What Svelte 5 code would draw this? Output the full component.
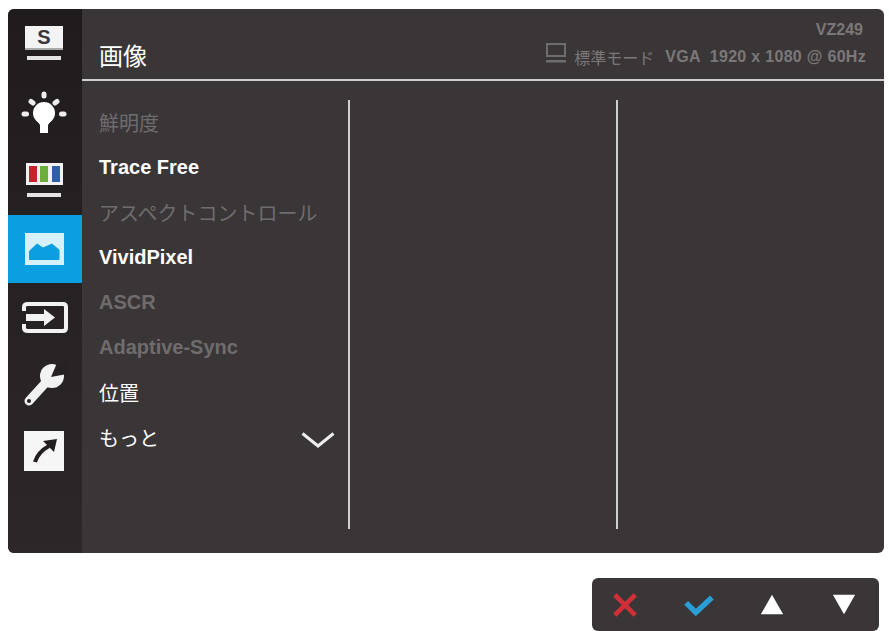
<script lang="ts">
    const items = [
        { label: '鮮明度', dim: true },
        { label: 'Trace Free' },
        { label: 'アスペクトコントロール', dim: true },
        { label: 'VividPixel' },
        { label: 'ASCR', dim: true },
        { label: 'Adaptive-Sync', dim: true },
        { label: '位置' },
        { label: 'もっと', more: true }
    ]
</script>

<div class="page">
    <div class="panel">
        <nav class="side">
            <div class="cell">
                <svg viewBox="0 0 44 44">
                    <rect x="2" y="3" width="38" height="24" fill="#f4f4f4" />
                    <rect x="2" y="25" width="38" height="2" fill="#a9a9a9" />
                    <text x="21" y="20.5" text-anchor="middle" class="s">S</text>
                    <rect x="4" y="33" width="34" height="4" fill="#e4e4e4" />
                </svg>
            </div>
            <div class="cell">
                <svg viewBox="0 0 44 44">
                    <circle cx="21" cy="22" r="11" fill="#fff" />
                    <path d="M13 28 L17 34 V42 H25 V34 L29 28 Z" fill="#fff" />
                    <g stroke="#eee" stroke-width="5" stroke-linecap="round">
                        <path d="M21 3 V5" />
                        <path d="M8 10.5 L10 12" />
                        <path d="M34 10.5 L32 12" />
                        <path d="M1 23 H3.5" />
                        <path d="M38.5 23 H41" />
                    </g>
                </svg>
            </div>
            <div class="cell">
                <svg viewBox="0 0 44 44">
                    <rect x="3" y="4" width="37" height="22" fill="#f2f2f2" />
                    <rect x="6" y="7" width="8" height="16" fill="#c8232c" />
                    <rect x="17" y="7" width="8" height="16" fill="#6cae3e" />
                    <rect x="29" y="7" width="8" height="16" fill="#2f5fa8" />
                    <rect x="4" y="34" width="34" height="4" fill="#e4e4e4" />
                </svg>
            </div>
            <div class="cell active">
                <svg viewBox="0 0 44 44">
                    <rect x="2" y="6" width="39" height="32" fill="#d5f1fb" />
                    <path d="M6.5 32.5 V24 L14 17 L20 21 L29 17 L36 23 V32.5 Z" fill="#0b9fdf" stroke="#0b9fdf" stroke-linejoin="round" />
                </svg>
            </div>
            <div class="cell">
                <svg viewBox="0 0 44 44">
                    <path d="M1 16 V12 Q1 9 5 9 H40 Q43 9 43 12 V33 Q43 36 40 36 H5 Q1 36 1 33 V29" fill="none" stroke="#f2f2f2" stroke-width="4" />
                    <path d="M3 19 H21 V14 L32 22.5 L21 31 V26 H3 Z" fill="#f2f2f2" />
                </svg>
            </div>
            <div class="cell">
                <svg viewBox="0 0 44 44">
                    <path d="M6 38 L26 16" stroke="#f2f2f2" stroke-width="9" stroke-linecap="round" />
                    <circle cx="29" cy="13" r="12" fill="#f2f2f2" />
                    <path d="M28 14 L34 0 L46 -2 L44 11 Z" fill="#262223" />
                    <circle cx="6" cy="38" r="2" fill="#262223" />
                </svg>
            </div>
            <div class="cell">
                <svg viewBox="0 0 44 44">
                    <rect x="1" y="0" width="40" height="40" fill="#f6f6f6" />
                    <path d="M12 31 Q15 21 26 15" fill="none" stroke="#231f20" stroke-width="4" />
                    <path d="M34 8 L20 10 L31 21 Z" fill="#231f20" />
                </svg>
            </div>
        </nav>

        <div class="main">
            <header class="head">
                <h1>画像</h1>
                <div class="info">
                    <div class="model">VZ249</div>
                    <div class="status">
                        <svg class="monitor" viewBox="0 0 20 20">
                            <path d="M1 1 H19 V13 H1 Z" fill="none" stroke="#6f6c6c" stroke-width="2" />
                            <rect x="0" y="17" width="20" height="2.5" fill="#6f6c6c" />
                        </svg>
                        <span class="mode">標準モード</span>
                        <b>VGA</b>
                        <b class="res">1920 x 1080 @ 60Hz</b>
                    </div>
                </div>
            </header>

            <div class="cols">
                <ul class="col">
                    {#each items as item}
                        <li class:dim={item.dim} class:latin={/^[A-Za-z]/.test(item.label)}>
                            <span>{item.label}</span>
                            {#if item.more}
                                <svg class="chevron" viewBox="0 0 34 16">
                                    <path d="M1.5 1.5 L17 14 L32.5 1.5" fill="none" stroke="#eee" stroke-width="3" />
                                </svg>
                            {/if}
                        </li>
                    {/each}
                </ul>
                <div class="col"></div>
                <div class="col last"></div>
            </div>
        </div>
    </div>

    <div class="foot">
        <div class="keys">
            <svg viewBox="0 0 28 28">
                <path d="M3 3 L25 25 M25 3 L3 25" stroke="#cf3038" stroke-width="5" />
            </svg>
            <svg class="check" viewBox="0 0 28 28">
                <path d="M2 12 L11 21 L26 7" fill="none" stroke="#2a9ed6" stroke-width="5" />
            </svg>
            <svg viewBox="0 0 28 28">
                <path d="M14 3 L26 24 H2 Z" fill="#fff" />
            </svg>
            <svg viewBox="0 0 28 28">
                <path d="M2 3 H26 L14 24 Z" fill="#fff" />
            </svg>
        </div>
    </div>
</div>

<style>
    :global(body) {
        background: #fff;
    }

    .page {
        padding: 9px 5px 0 8px;
        font-family: 'Liberation Sans', 'Noto Sans CJK JP', sans-serif;
    }

    .panel {
        display: flex;
        height: 544px;
        border-radius: 6px;
        overflow: hidden;
        background: #3a3637;
    }

    .side {
        width: 74px;
        padding-top: 2px;
        background: linear-gradient(#201c1d, #2c2829);
    }

    .cell {
        display: flex;
        align-items: center;
        justify-content: center;
        height: 68px;
    }

    .cell svg {
        width: 44px;
        height: 44px;
        overflow: visible;
    }

    .active {
        background: #0b9fdf;
    }

    .s {
        font-size: 20px;
        font-weight: 700;
        fill: #3a3637;
    }

    .main {
        flex: 1;
        display: flex;
        flex-direction: column;
    }

    .head {
        display: flex;
        align-items: flex-end;
        justify-content: space-between;
        height: 62px;
        padding: 0 18px 8px 17px;
        border-bottom: 2px solid #cfcfcf;
    }

    h1 {
        margin: 0;
        font-size: 24px;
        font-weight: 400;
        line-height: 29px;
        color: #fff;
    }

    .info {
        margin-bottom: 2px;
        text-align: right;
        color: #7b7879;
        font-size: 16px;
    }

    .model {
        font-weight: 700;
        padding-right: 3px;
        margin-bottom: 6px;
    }

    .status {
        display: flex;
        align-items: center;
        justify-content: flex-end;
    }

    .status b {
        letter-spacing: 0.3px;
    }

    .monitor {
        width: 20px;
        height: 20px;
        margin-top: -8px;
        margin-right: 8px;
    }

    .mode {
        margin-right: 11px;
    }

    .status .res {
        margin-left: 9px;
    }

    .cols {
        flex: 1;
        display: grid;
        grid-template-columns: 268px 268px 1fr;
        padding: 19px 0 24px;
    }

    .col {
        margin: 0;
        padding: 0;
        list-style: none;
        border-right: 2px solid #cfcfcf;
    }

    .last {
        border-right: none;
    }

    li {
        display: flex;
        align-items: center;
        justify-content: space-between;
        height: 45px;
        padding: 0 13px 0 17px;
        font-size: 20px;
        color: #fff;
    }

    .latin {
        font-weight: 700;
    }

    .dim {
        color: #6f6c6d;
    }

    .chevron {
        width: 34px;
        height: 16px;
        margin-top: 4px;
    }

    .foot {
        display: flex;
        justify-content: flex-end;
        margin-top: 25px;
        padding-right: 5px;
    }

    .keys {
        display: flex;
        align-items: center;
        justify-content: space-between;
        box-sizing: border-box;
        width: 287px;
        height: 53px;
        padding: 0 22px 0 20px;
        border-radius: 6px;
        background: #3a3637;
    }

    .keys svg {
        width: 26px;
        height: 26px;
    }

    .keys .check {
        width: 30px;
        height: 30px;
    }
</style>
